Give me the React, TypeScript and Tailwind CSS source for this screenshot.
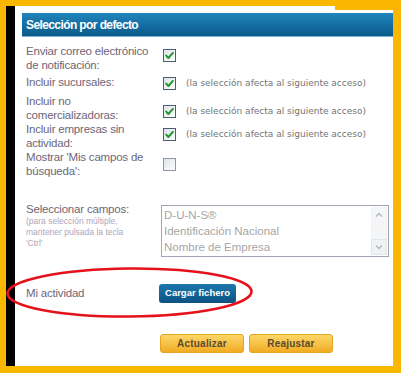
import React from "react";

const labelFont = { fontFamily: '"Liberation Sans", Arial, sans-serif' };
const hintFont = { fontFamily: '"DejaVu Sans", "Liberation Sans", sans-serif' };

function Box({ checked }: { checked: boolean }) {
  return (
    <svg width="13" height="13" viewBox="0 0 13 13" className="shrink-0">
      <defs>
        <linearGradient id={checked ? "cbg1" : "cbg0"} x1="0" y1="0" x2="1" y2="1">
          <stop offset="0" stopColor="#dde2e8" />
          <stop offset="1" stopColor="#ffffff" />
        </linearGradient>
      </defs>
      <rect x="0.5" y="0.5" width="12" height="12" fill={`url(#${checked ? "cbg1" : "cbg0"})`} stroke={checked ? "#4c5d76" : "#8e97a5"} />
      {checked && (
        <path d="M3.2 6.6 L5.4 9 L9.9 3.9" fill="none" stroke="#1f9a2c" strokeWidth="2" strokeLinecap="round" strokeLinejoin="round" />
      )}
    </svg>
  );
}

function Hint() {
  return (
    <span className="ml-[10px] text-[9px] leading-[13px] text-[#747474] whitespace-nowrap" style={hintFont}>
      (la selección afecta al siguiente acceso)
    </span>
  );
}

function Row({
  lines,
  checked,
  hint,
  boxTop,
  h,
  mt,
}: {
  lines: string[];
  checked: boolean;
  hint: boolean;
  boxTop: number;
  h: string;
  mt: string;
}) {
  return (
    <div className={`flex ${h} ${mt}`}>
      <div className="w-[137px] shrink-0 text-[11.5px] tracking-[-0.2px] leading-[14px] text-[#6e6678]" style={labelFont}>
        {lines.map((l, i) => (
          <div key={i} className="whitespace-nowrap">{l}</div>
        ))}
      </div>
      <div className="flex items-center h-[13px]" style={{ marginTop: boxTop }}>
        <Box checked={checked} />
        {hint && <Hint />}
      </div>
    </div>
  );
}

export default function App() {
  return (
    <div className="relative w-[401px] h-[373px] bg-[#f9b700] pt-[6px] pl-[6px] pr-[8px] pb-[7px]">
      <div className="flex h-full">
        <div className="w-[9px] bg-black shrink-0" />
        <div className="flex-1 bg-white pl-[7px] pt-[7px]">
          <div
            className="h-[24px] flex items-center pl-[4px] text-white font-bold text-[12px] tracking-[-0.6px] border-b border-[#7fb2d2] bg-gradient-to-b from-[#1f85bd] to-[#0a5a8a]"
            style={labelFont}
          >
            Selección por defecto
          </div>
          <div className="pl-[4px]">
            <Row lines={["Enviar correo electrónico", "de notificación:"]} checked hint={false} boxTop={5} h="h-[28px]" mt="mt-[7px]" />
            <Row lines={["Incluir sucursales:"]} checked hint boxTop={2} h="h-[14px]" mt="mt-[3px]" />
            <Row lines={["Incluir no", "comercializadoras:"]} checked hint boxTop={11} h="h-[28px]" mt="mt-[5px]" />
            <Row lines={["Incluir empresas sin", "actividad:"]} checked hint boxTop={6} h="h-[28px]" mt="mt-0" />
            <Row lines={["Mostrar 'Mis campos de", "búsqueda':"]} checked={false} hint={false} boxTop={8} h="h-[28px]" mt="mt-0" />

            <div className="flex mt-[24px]">
              <div className="w-[135px] shrink-0">
                <div className="text-[11.5px] tracking-[-0.2px] leading-[14px] text-[#6e6678] whitespace-nowrap" style={labelFont}>
                  Seleccionar campos:
                </div>
                <div className="text-[8.5px] leading-[11px] text-[#aea7b9]" style={labelFont}>
                  <div className="whitespace-nowrap">(para selección múltiple,</div>
                  <div className="whitespace-nowrap">mantener pulsada la tecla</div>
                  <div className="whitespace-nowrap">'Ctrl'</div>
                </div>
              </div>
              <div className="mt-[3px] w-[228px] h-[52px] border border-[#9ea7b3] bg-white flex p-[1px]">
                <div className="flex-1 text-[11.5px] leading-[16px] text-[#a6a6a6] pl-[1px]" style={labelFont}>
                  <div>D-U-N-S®</div>
                  <div>Identificación Nacional</div>
                  <div>Nombre de Empresa</div>
                </div>
                <div className="w-[16px] flex flex-col bg-[#f4f5f6]">
                  <div className="h-[16px] flex items-center justify-center">
                    <svg width="8" height="6" viewBox="0 0 8 6">
                      <path d="M1 4.5 L4 1.5 L7 4.5" fill="none" stroke="#aeb6c2" strokeWidth="1.3" />
                    </svg>
                  </div>
                  <div className="flex-1" />
                  <div className="h-[16px] flex items-center justify-center border border-[#e2e5e9] bg-[#f0f1f3]">
                    <svg width="8" height="6" viewBox="0 0 8 6">
                      <path d="M1 1.5 L4 4.5 L7 1.5" fill="none" stroke="#aeb6c2" strokeWidth="1.3" />
                    </svg>
                  </div>
                </div>
              </div>
            </div>

            <div className="flex items-center mt-[27px] h-[19px]">
              <div className="w-[133px] shrink-0 text-[11.5px] tracking-[-0.2px] text-[#6e6678]" style={labelFont}>
                Mi actividad
              </div>
              <div
                className="w-[77px] h-[19px] rounded-[3px] bg-gradient-to-b from-[#1e78ad] to-[#0b5282] flex items-center justify-center text-white font-bold text-[9.5px]"
                style={labelFont}
              >
                Cargar fichero
              </div>
            </div>

            <div className="flex mt-[31px] pl-[134px] gap-[5px]">
              <div
                className="w-[84px] h-[19px] rounded-[3px] border border-[#e3a521] bg-gradient-to-b from-[#fcd766] to-[#f1ab1e] flex items-center justify-center text-[#5c4b2c] font-bold text-[10px] tracking-[0.2px]"
                style={labelFont}
              >
                Actualizar
              </div>
              <div
                className="w-[84px] h-[19px] rounded-[3px] border border-[#e3a521] bg-gradient-to-b from-[#fcd766] to-[#f1ab1e] flex items-center justify-center text-[#5c4b2c] font-bold text-[10px] tracking-[0.2px]"
                style={labelFont}
              >
                Reajustar
              </div>
            </div>
          </div>
        </div>
      </div>
      <div className="absolute left-[335px] top-0 w-[66px] h-[10px] bg-[#f9b700]" />
      <svg className="absolute left-0 top-0 pointer-events-none" width="401" height="373" viewBox="0 0 401 373">
        <ellipse cx="129.5" cy="292.5" rx="122" ry="24" fill="none" stroke="#e5121b" strokeWidth="2.6" transform="rotate(-0.5 129.5 292.5)" />
      </svg>
    </div>
  );
}
